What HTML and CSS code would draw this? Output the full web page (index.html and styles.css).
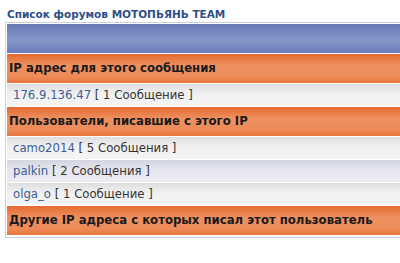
FILE: index.html
```html
<!DOCTYPE html>
<html lang="ru">
<head>
  <meta charset="UTF-8">
  <title>IP адрес</title>
  <link rel="stylesheet" href="styles.css">
</head>
<body>

  <div class="crumbs"><a href="#">Список форумов МОТОПЬЯНЬ TEAM</a></div>

  <div class="forumline">
    <div class="cat-head"></div>

    <div class="row-head">IP адрес для этого сообщения</div>
    <div class="row row1">176.9.136.47 <span class="count">[ 1 Сообщение ]</span></div>

    <div class="row-head">Пользователи, писавшие с этого IP</div>
    <div class="row row1"><a href="#">camo2014</a> <span class="count">[ 5 Сообщения ]</span></div>
    <div class="row row2"><a href="#">palkin</a> <span class="count">[ 2 Сообщения ]</span></div>
    <div class="row row1"><a href="#">olga_o</a> <span class="count">[ 1 Сообщение ]</span></div>

    <div class="row-head">Другие IP адреса с которых писал этот пользователь</div>
  </div>

</body>
</html>
```

FILE: styles.css
```css
body {
  margin: 0;
  padding: 7px 0 0 5px;
  background: #fff;
  font-family: 'DejaVu Sans', Verdana, sans-serif;
  font-size: 11.7px;
  overflow: hidden;
}

a {
  color: #3f5c95;
  text-decoration: none;
}

.crumbs {
  padding-left: 2px;
  height: 15px;
  line-height: 14px;
  font-size: 10.5px;
  font-weight: bold;
}

.crumbs a {
  color: #2f4f86;
}

.forumline {
  border: 1px solid #c9cfe0;
  border-right: none;
  padding: 1px 0 1px 1px;
  background: #fff;
}

.cat-head {
  height: 29px;
  background: linear-gradient(#6679b4, #8696c7 55%, #7486bf 85%, #6a7db7);
  border-bottom: 1px solid #fff;
}

.row-head {
  height: 29px;
  line-height: 29px;
  padding-left: 2px;
  font-weight: bold;
  color: #1a1a1a;
  white-space: nowrap;
  background: linear-gradient(#e56a2e, #ee9062 40%, #ed8a58 80%, #e7743d);
  border-bottom: 1px solid #fff;
}

.row {
  height: 22px;
  line-height: 22px;
  padding-left: 6px;
  color: #3f5c95;
  border-bottom: 1px solid #fff;
}

.count {
  color: #333;
}

.row1 {
  background: linear-gradient(#dedede, #f1f1f1 45%, #f4f4f4);
}

.row2 {
  background: linear-gradient(#d2d4e0, #e6e7ef 45%, #ebebf1);
}
```
